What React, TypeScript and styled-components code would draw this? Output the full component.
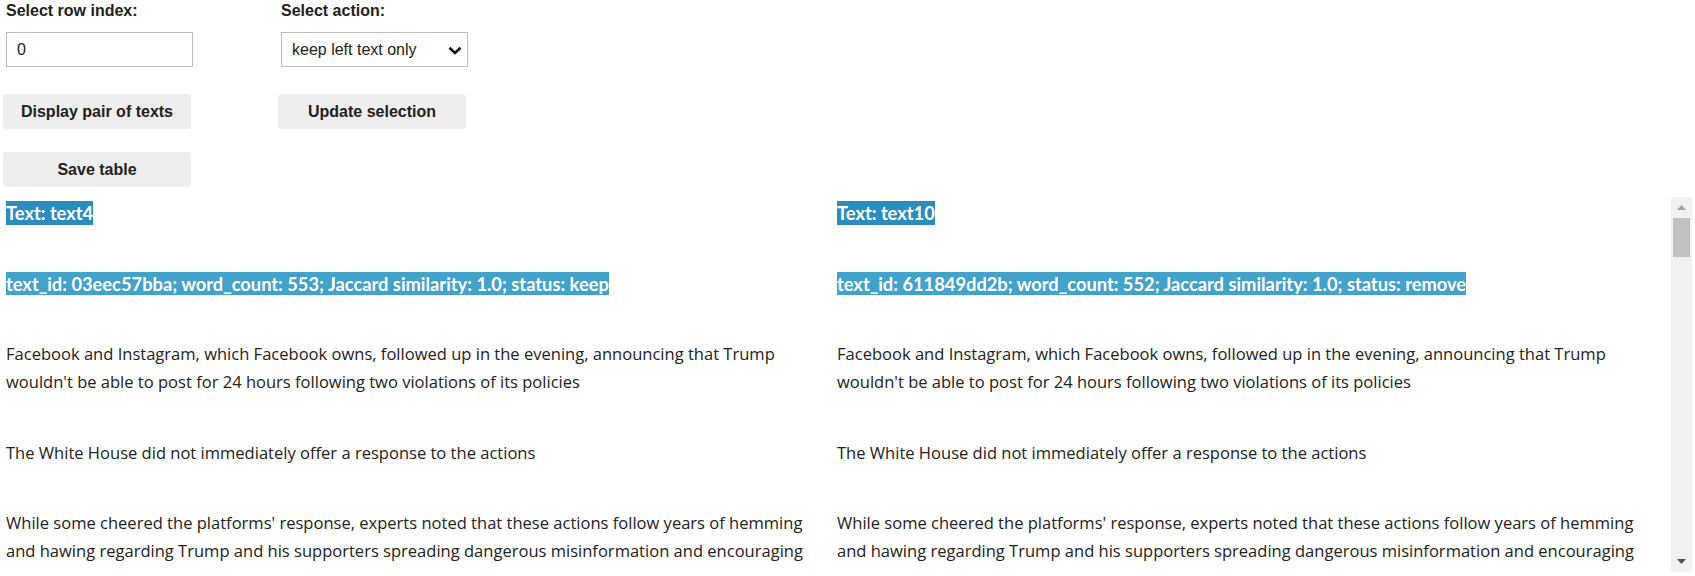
import React from "react";
import styled, { createGlobalStyle } from "styled-components";

const GlobalStyle = createGlobalStyle`
  html, body {
    margin: 0;
    padding: 0;
    background: #ffffff;
  }
  body {
    font-family: "Liberation Sans", Arial, sans-serif;
    color: #212121;
  }
  *, *::before, *::after {
    box-sizing: border-box;
  }
`;

const Page = styled.div`
  width: 1695px;
  height: 576px;
  overflow: hidden;
  padding: 0 3px;
  display: flex;
  flex-direction: column;
`;

const Controls = styled.div`
  display: grid;
  grid-template-columns: 188px 188px;
  column-gap: 87px;
`;

const ControlColumn = styled.div`
  display: flex;
  flex-direction: column;
  align-items: flex-start;
`;

const FieldLabel = styled.label`
  margin-left: 3px;
  height: 22px;
  font-size: 16px;
  line-height: 22px;
  font-weight: 700;
  color: #212121;
  white-space: nowrap;
`;

const fieldBase = `
  width: 187px;
  height: 35px;
  margin: 10px 0 0 3px;
  border: 1px solid #bdbdbd;
  border-radius: 0;
  background: #ffffff;
  font-family: "Liberation Sans", Arial, sans-serif;
  font-size: 16px;
  color: #212121;
  padding: 0 10px;
  outline: none;
`;

const TextInput = styled.input`
  ${fieldBase}
`;

const SelectWrap = styled.div`
  position: relative;
  margin: 10px 0 0 3px;
  width: 187px;
  height: 35px;
`;

const Select = styled.select`
  ${fieldBase}
  margin: 0;
  appearance: none;
  -webkit-appearance: none;
  padding-right: 30px;
`;

const Chevron = styled.svg`
  position: absolute;
  right: 6px;
  top: 14px;
  pointer-events: none;
`;

const ActionButton = styled.button<{ $gap: number }>`
  margin-top: ${(p) => p.$gap}px;
  width: 188px;
  height: 35px;
  border: none;
  border-radius: 3px;
  background: #eeeeee;
  font-family: "Liberation Sans", Arial, sans-serif;
  font-size: 16px;
  font-weight: 700;
  color: #212121;
  padding: 0;
  cursor: pointer;
`;

const Frame = styled.div`
  margin-top: 10px;
  height: 375px;
  display: flex;
`;

const FrameContent = styled.div`
  flex: 1;
  overflow: hidden;
  display: grid;
  grid-template-columns: 831px 831px;
  align-items: start;
`;

const TextColumn = styled.div`
  padding: 2px 0 0 3px;
  display: flex;
  flex-direction: column;
  gap: 42.5px;
`;

const HeadingLine = styled.div`
  line-height: 28px;
  font-family: Lato, "Open Sans", sans-serif;
  font-size: 18.3px;
  font-weight: 700;
  white-space: nowrap;
`;

const Highlight = styled.span<{ $tone: string }>`
  background: ${(p) => p.$tone};
  color: #ffffff;
  padding: 0.6px 0;
`;

const Paragraph = styled.p`
  margin: 0;
  font-family: "Open Sans", "Noto Sans", sans-serif;
  font-size: 16.55px;
  line-height: 28px;
  color: #222222;
`;

const Scrollbar = styled.div`
  width: 21px;
  flex: none;
  background: #f1f1f1;
  display: flex;
  flex-direction: column;
`;

const ScrollButton = styled.div<{ $end?: boolean }>`
  height: 21px;
  flex: none;
  display: flex;
  align-items: center;
  justify-content: center;
  margin-top: ${(p) => (p.$end ? "auto" : "0")};
`;

const Thumb = styled.div`
  height: 39px;
  margin: 0 2px;
  background: #c1c1c1;
`;

type Side = {
  title: string;
  meta: string;
};

const sides: Side[] = [
  {
    title: "Text: text4",
    meta: "text_id: 03eec57bba; word_count: 553; Jaccard similarity: 1.0; status: keep",
  },
  {
    title: "Text: text10",
    meta: "text_id: 611849dd2b; word_count: 552; Jaccard similarity: 1.0; status: remove",
  },
];

const paragraphs = [
  "Facebook and Instagram, which Facebook owns, followed up in the evening, announcing that Trump wouldn't be able to post for 24 hours following two violations of its policies",
  "The White House did not immediately offer a response to the actions",
  "While some cheered the platforms' response, experts noted that these actions follow years of hemming and hawing regarding Trump and his supporters spreading dangerous misinformation and encouraging",
];

export default function App() {
  return (
    <>
      <GlobalStyle />
      <Page>
        <Controls>
          <ControlColumn>
            <FieldLabel htmlFor="row-index">Select row index:</FieldLabel>
            <TextInput id="row-index" type="text" defaultValue="0" />
            <ActionButton $gap={27}>Display pair of texts</ActionButton>
            <ActionButton $gap={23}>Save table</ActionButton>
          </ControlColumn>
          <ControlColumn>
            <FieldLabel htmlFor="action">Select action:</FieldLabel>
            <SelectWrap>
              <Select id="action" defaultValue="left">
                <option value="left">keep left text only</option>
                <option value="right">keep right text only</option>
                <option value="both">keep both</option>
                <option value="none">remove both</option>
              </Select>
              <Chevron width="14" height="9" viewBox="0 0 14 9">
                <path d="M1.5 1.8 L7 7 L12.5 1.8" fill="none" stroke="#111" strokeWidth="2.6" />
              </Chevron>
            </SelectWrap>
            <ActionButton $gap={27}>Update selection</ActionButton>
          </ControlColumn>
        </Controls>

        <Frame>
          <FrameContent>
            {sides.map((s) => (
              <TextColumn key={s.title}>
                <HeadingLine>
                  <Highlight $tone="#2b8cbe">{s.title}</Highlight>
                </HeadingLine>
                <HeadingLine>
                  <Highlight $tone="#43a2ca">{s.meta}</Highlight>
                </HeadingLine>
                {paragraphs.map((p, i) => (
                  <Paragraph key={i}>{p}</Paragraph>
                ))}
              </TextColumn>
            ))}
          </FrameContent>
          <Scrollbar>
            <ScrollButton>
              <svg width="9" height="5" viewBox="0 0 9 5">
                <path d="M0 5 L4.5 0 L9 5 Z" fill="#a3a3a3" />
              </svg>
            </ScrollButton>
            <Thumb />
            <ScrollButton $end>
              <svg width="9" height="5" viewBox="0 0 9 5">
                <path d="M0 0 L9 0 L4.5 5 Z" fill="#505050" />
              </svg>
            </ScrollButton>
          </Scrollbar>
        </Frame>
      </Page>
    </>
  );
}
